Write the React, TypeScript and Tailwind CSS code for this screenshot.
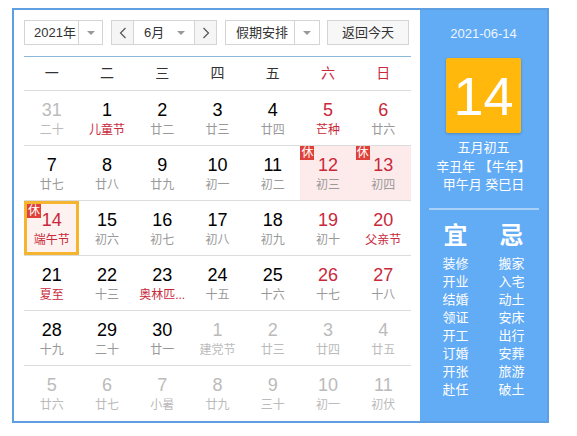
import React from 'react'

type Day = {
  n: number
  lunar: string
  other?: boolean
  fest?: boolean
  rest?: boolean
  today?: boolean
}

const rows: Day[][] = [
  [
    { n: 31, lunar: '二十', other: true },
    { n: 1, lunar: '儿童节', fest: true },
    { n: 2, lunar: '廿二' },
    { n: 3, lunar: '廿三' },
    { n: 4, lunar: '廿四' },
    { n: 5, lunar: '芒种', fest: true },
    { n: 6, lunar: '廿六' },
  ],
  [
    { n: 7, lunar: '廿七' },
    { n: 8, lunar: '廿八' },
    { n: 9, lunar: '廿九' },
    { n: 10, lunar: '初一' },
    { n: 11, lunar: '初二' },
    { n: 12, lunar: '初三', rest: true },
    { n: 13, lunar: '初四', rest: true },
  ],
  [
    { n: 14, lunar: '端午节', fest: true, rest: true, today: true },
    { n: 15, lunar: '初六' },
    { n: 16, lunar: '初七' },
    { n: 17, lunar: '初八' },
    { n: 18, lunar: '初九' },
    { n: 19, lunar: '初十' },
    { n: 20, lunar: '父亲节', fest: true },
  ],
  [
    { n: 21, lunar: '夏至', fest: true },
    { n: 22, lunar: '十三' },
    { n: 23, lunar: '奥林匹...', fest: true },
    { n: 24, lunar: '十五' },
    { n: 25, lunar: '十六' },
    { n: 26, lunar: '十七' },
    { n: 27, lunar: '十八' },
  ],
  [
    { n: 28, lunar: '十九' },
    { n: 29, lunar: '二十' },
    { n: 30, lunar: '廿一' },
    { n: 1, lunar: '建党节', other: true },
    { n: 2, lunar: '廿三', other: true },
    { n: 3, lunar: '廿四', other: true },
    { n: 4, lunar: '廿五', other: true },
  ],
  [
    { n: 5, lunar: '廿六', other: true },
    { n: 6, lunar: '廿七', other: true },
    { n: 7, lunar: '小暑', other: true },
    { n: 8, lunar: '廿九', other: true },
    { n: 9, lunar: '三十', other: true },
    { n: 10, lunar: '初一', other: true },
    { n: 11, lunar: '初伏', other: true },
  ],
]

const weekdays = ['一', '二', '三', '四', '五', '六', '日']
const yi = ['装修', '开业', '结婚', '领证', '开工', '订婚', '开张', '赴任']
const ji = ['搬家', '入宅', '动土', '安床', '出行', '安葬', '旅游', '破土']

function Caret() {
  return <span className="w-0 h-0 border-x-[4px] border-x-transparent border-t-[4px] border-t-[#999]" />
}

function Chevron({ dir }: { dir: 'left' | 'right' }) {
  return (
    <svg width="8" height="12" viewBox="0 0 8 12" fill="none" stroke="#555" strokeWidth="1.2">
      {dir === 'left' ? <path d="M6.5 1 L1.5 6 L6.5 11" /> : <path d="M1.5 1 L6.5 6 L1.5 11" />}
    </svg>
  )
}

function Cell({ d, col }: { d: Day; col: number }) {
  const weekend = col >= 5
  let numColor = 'text-[#000]'
  if (d.other) numColor = 'text-[#bbb]'
  else if (weekend || d.today) numColor = 'text-[#c9283b]'
  let lunarColor = 'text-[#999]'
  if (d.other) lunarColor = 'text-[#bbb]'
  else if (d.fest) lunarColor = 'text-[#c9283b]'

  const bg = d.today ? 'bg-[#fdf2ef] border-[3px] border-[#f5b52e]' : d.rest ? 'bg-[#fdebec]' : ''
  return (
    <div className={`relative flex flex-col items-center h-[54px] ${bg}`}>
      {d.rest && (
        <span className="absolute top-0 left-0 w-[14px] h-[14px] bg-[#e0403a] text-white text-[12px] leading-[14px] text-center">
          休
        </span>
      )}
      <div className={`${d.today ? 'pt-[6px]' : 'pt-[9px]'} text-[18px] leading-[20px] ${numColor}`}>{d.n}</div>
      <div className={`mt-[2px] text-[12px] leading-[16px] whitespace-nowrap ${lunarColor}`}>{d.lunar}</div>
    </div>
  )
}

export default function App() {
  return (
    <div
      className="pl-[12px] pt-[8px]"
      style={{ fontFamily: '"Liberation Sans", Arial, "Noto Sans CJK SC", sans-serif' }}
    >
      <div className="flex w-[537px] h-[415px] border-2 border-[#5d9fe0] bg-white">
        {/* Left: calendar */}
        <div className="w-[406px] pl-[10px] pr-[9px] pt-[10px]">
          <div className="flex h-[25px] text-[13px] text-[#333]">
            <div className="flex w-[79px] border border-[#d4d4d4]">
              <div className="flex-1 flex items-center pl-[9px]">2021年</div>
              <div className="w-[24px] flex items-center justify-center border-l border-[#d4d4d4]">
                <Caret />
              </div>
            </div>
            <div className="ml-[8px] flex w-[106px] border border-[#d4d4d4]">
              <div className="w-[22px] flex items-center justify-center bg-[#f5f5f5] border-r border-[#d4d4d4]">
                <Chevron dir="left" />
              </div>
              <div className="flex-1 flex items-center justify-between pl-[10px] pr-[9px]">
                <span>6月</span>
                <Caret />
              </div>
              <div className="w-[22px] flex items-center justify-center bg-[#f5f5f5] border-l border-[#d4d4d4]">
                <Chevron dir="right" />
              </div>
            </div>
            <div className="ml-[8px] flex w-[95px] border border-[#d4d4d4]">
              <div className="flex-1 flex items-center pl-[10px]">假期安排</div>
              <div className="w-[25px] flex items-center justify-center border-l border-[#d4d4d4]">
                <Caret />
              </div>
            </div>
            <div className="ml-[7px] w-[82px] flex items-center justify-center border border-[#d4d4d4] bg-[#f7f7f7]">
              返回今天
            </div>
          </div>

          <div className="mt-[11px] h-px bg-[#8cb8da]" />

          <div className="grid grid-cols-7 h-[34px] border-b border-[#dcdcdc] text-[14px]">
            {weekdays.map((w, i) => (
              <div key={w} className={`flex items-center justify-center ${i >= 5 ? 'text-[#c9283b]' : 'text-[#333]'}`}>
                {w}
              </div>
            ))}
          </div>

          {rows.map((r, ri) => (
            <div key={ri} className={`grid grid-cols-7 ${ri < rows.length - 1 ? 'border-b border-[#dcdcdc]' : ''}`}>
              {r.map((d, ci) => (
                <Cell key={ci} d={d} col={ci} />
              ))}
            </div>
          ))}
        </div>

        {/* Right: day detail */}
        <div className="flex-1 bg-[#62abf5] flex flex-col items-center text-white">
          <div className="mt-[16px] text-[13px] leading-[16px] text-[#eef6ff]">2021-06-14</div>
          <div className="mt-[16px] w-[75px] h-[75px] rounded-[2px] bg-[#ffb80b] shadow-[0_1px_3px_rgba(0,0,0,0.2)] flex items-center justify-center text-[54px] leading-none">
            14
          </div>
          <div className="mt-[6px] text-[13px] leading-[18.5px] text-center">
            <div>五月初五</div>
            <div>辛丑年 【牛年】</div>
            <div>甲午月 癸巳日</div>
          </div>
          <div className="mt-[13px] w-[110px] h-[2px] bg-[#a9d0f7]" />
          <div className="mt-[12px] flex gap-[30px]">
            <div className="flex flex-col items-center">
              <div className="text-[24px] leading-[28px] font-bold">宜</div>
              <div className="mt-[5px] text-[13px] leading-[18px] text-center">
                {yi.map((t) => (
                  <div key={t}>{t}</div>
                ))}
              </div>
            </div>
            <div className="flex flex-col items-center">
              <div className="text-[24px] leading-[28px] font-bold">忌</div>
              <div className="mt-[5px] text-[13px] leading-[18px] text-center">
                {ji.map((t) => (
                  <div key={t}>{t}</div>
                ))}
              </div>
            </div>
          </div>
        </div>
      </div>
    </div>
  )
}
